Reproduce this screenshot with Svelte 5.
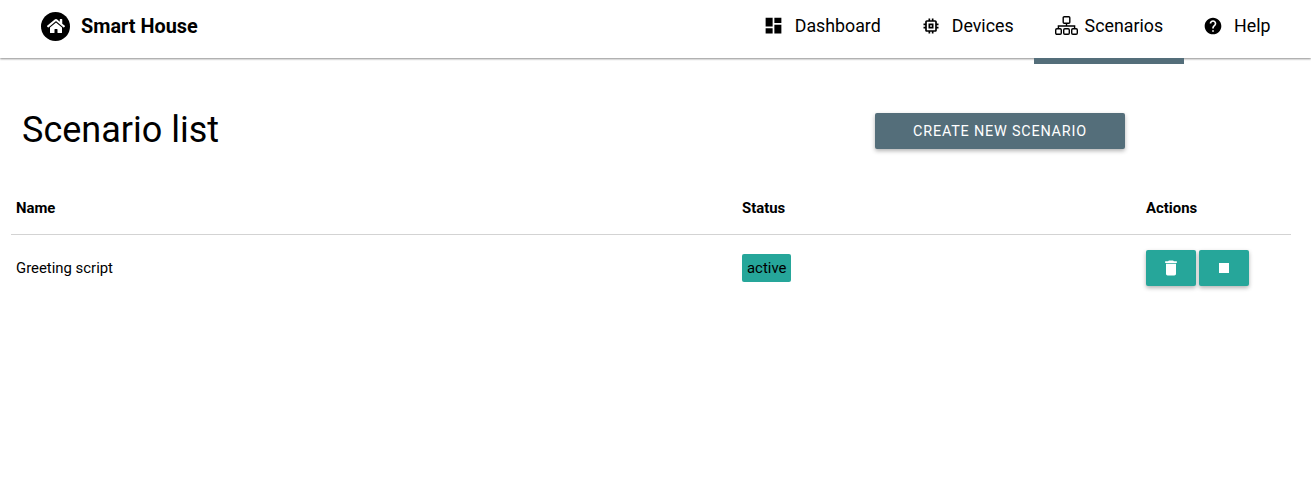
<script>
  const tabs = [
    { label: "Dashboard", icon: "dashboard", size: 21 },
    { label: "Devices", icon: "memory", size: 20 },
    { label: "Scenarios", icon: "sitemap", active: true },
    { label: "Help", icon: "help", size: 20 }
  ];

  const paths = {
    dashboard: "M3 13h8V3H3v10zm0 8h8v-6H3v6zm10 0h8V11h-8v10zm0-18v6h8V3h-8z",
    memory: "M15 9H9v6h6V9zm-2 4h-2v-2h2v2zm8-2V9h-2V7c0-1.1-.9-2-2-2h-2V3h-2v2h-2V3H9v2H7c-1.1 0-2 .9-2 2v2H3v2h2v2H3v2h2v2c0 1.1.9 2 2 2h2v2h2v-2h2v2h2v-2h2c1.1 0 2-.9 2-2v-2h2v-2h-2v-2h2zm-4 6H7V7h10v10z",
    help: "M12 2C6.48 2 2 6.48 2 12s4.48 10 10 10 10-4.48 10-10S17.52 2 12 2zm1 17h-2v-2h2v2zm2.07-7.75l-.9.92C13.45 12.9 13 13.5 13 15h-2v-.5c0-1.1.45-2.1 1.17-2.83l1.24-1.26c.37-.36.59-.86.59-1.41 0-1.1-.9-2-2-2s-2 .9-2 2H8c0-2.21 1.79-4 4-4s4 1.79 4 4c0 .88-.36 1.68-.93 2.25z"
  };
</script>

<header class="topbar">
  <div class="brand">
    <span class="logo">
      <svg viewBox="0 0 576 512" width="18" height="16">
        <path fill="#fff" d="M280.37 148.26L96 300.11V464a16 16 0 0 0 16 16l112.06-.29a16 16 0 0 0 15.92-16V368a16 16 0 0 1 16-16h64a16 16 0 0 1 16 16v95.64a16 16 0 0 0 16 16.05L464 480a16 16 0 0 0 16-16V300L295.67 148.26a12.19 12.19 0 0 0-15.3 0zM571.6 251.47L488 182.56V44.05a12 12 0 0 0-12-12h-56a12 12 0 0 0-12 12v72.61L318.47 43a48 48 0 0 0-61 0L4.34 251.47a12 12 0 0 0-1.6 16.9l25.5 31A12 12 0 0 0 45.15 301l235.22-193.74a12.19 12.19 0 0 1 15.3 0L530.9 301a12 12 0 0 0 16.9-1.6l25.5-31a12 12 0 0 0-1.7-16.93z" />
      </svg>
    </span>
    <span class="brand-name">Smart House</span>
  </div>
  <nav class="tabs">
    {#each tabs as tab}
      <div class="tab" class:active={tab.active}>
        {#if tab.icon === "sitemap"}
          <svg class="sitemap" viewBox="0 0 23 19" width="23" height="19" fill="none" stroke="#000" stroke-width="1.4">
            <rect x="8.2" y="0.7" width="6.6" height="6.6" rx="1" />
            <path d="M11.5 7.3V10M3.4 13V10H19.6V13" />
            <rect x="0.7" y="12.8" width="5.6" height="5.5" rx="1.2" />
            <rect x="8.7" y="12.8" width="5.6" height="5.5" rx="1.2" />
            <rect x="16.7" y="12.8" width="5.6" height="5.5" rx="1.2" />
          </svg>
        {:else}
          <svg viewBox="0 0 24 24" width={tab.size} height={tab.size}><path d={paths[tab.icon]} /></svg>
        {/if}
        <span>{tab.label}</span>
      </div>
    {/each}
  </nav>
</header>

<main class="page">
  <div class="title-row">
    <h1>Scenario list</h1>
    <button class="create">Create new scenario</button>
  </div>

  <table>
    <thead>
      <tr>
        <th class="col-name">Name</th>
        <th class="col-status">Status</th>
        <th>Actions</th>
      </tr>
    </thead>
    <tbody>
      <tr>
        <td>Greeting script</td>
        <td><span class="badge">active</span></td>
        <td>
          <div class="actions">
            <button class="icon-btn" aria-label="Delete">
              <svg viewBox="0 0 24 24" width="20" height="20"><path fill="#fff" d="M6 19c0 1.1.9 2 2 2h8c1.1 0 2-.9 2-2V7H6v12zM19 4h-3.5l-1-1h-5l-1 1H5v2h14V4z" /></svg>
            </button>
            <button class="icon-btn" aria-label="Stop">
              <svg viewBox="0 0 24 24" width="20" height="20"><path fill="#fff" d="M6 6h12v12H6z" /></svg>
            </button>
          </div>
        </td>
      </tr>
    </tbody>
  </table>
</main>

<style>
  :global(body) {
    margin: 0;
    background: #fff;
    font-family: Roboto, "Liberation Sans", sans-serif;
    color: #000;
  }
  .topbar {
    height: 58px;
    display: flex;
    align-items: center;
    justify-content: space-between;
    padding: 0 20.5px 0 41px;
    box-shadow: 0 1px 2px rgba(0, 0, 0, 0.45);
    background: #fff;
  }
  .brand {
    display: flex;
    align-items: center;
    gap: 11px;
    margin-top: -6px;
  }
  .logo {
    width: 29px;
    height: 29px;
    border-radius: 50%;
    background: #000;
    display: flex;
    align-items: center;
    justify-content: center;
  }
  .brand-name {
    font-size: 19.85px;
    font-weight: 700;
  }
  .tabs {
    display: flex;
    height: 100%;
  }
  .tab {
    position: relative;
    display: flex;
    align-items: center;
    gap: 11px;
    padding: 0 20px 7px 19px;
    font-size: 17.8px;
  }
  .tab:first-child,
  .tab.active {
    padding-right: 21px;
  }
  .tab svg {
    display: block;
  }
  .tab .sitemap {
    margin: 0 -4px 0 2px;
  }
  .tab.active::after {
    content: "";
    position: absolute;
    left: 0;
    right: 0;
    top: 58px;
    height: 6px;
    background: #546e7a;
  }
  .page {
    padding: 52px 20px 0 11px;
  }
  .title-row {
    display: grid;
    grid-template-columns: 864px 250px;
    align-items: center;
    height: 36px;
  }
  h1 {
    margin: 0 0 0 11px;
    font-size: 36px;
    font-weight: 400;
    position: relative;
    top: -1px;
  }
  .create {
    height: 36px;
    border: 0;
    border-radius: 2px;
    background: #546e7a;
    color: #fff;
    font-family: inherit;
    font-size: 14.4px;
    letter-spacing: 0.8px;
    text-transform: uppercase;
    box-shadow: 0 2px 4px rgba(0, 0, 0, 0.3);
  }
  table {
    width: 1280px;
    margin-top: 35px;
    border-collapse: collapse;
    table-layout: fixed;
    font-size: 14.9px;
  }
  th {
    height: 53px;
    padding: 0 5px;
    text-align: left;
    font-weight: 700;
    border-bottom: 1px solid #d3d3d3;
  }
  .col-name {
    width: 716px;
  }
  .col-status {
    width: 394px;
  }
  td {
    height: 66px;
    padding: 0 5px;
  }
  .badge {
    display: inline-block;
    padding: 0 5px;
    line-height: 28px;
    border-radius: 2px;
    background: #26a69a;
  }
  .actions {
    display: flex;
    gap: 3px;
  }
  .icon-btn {
    width: 50px;
    height: 36px;
    padding: 0;
    border: 0;
    border-radius: 2px;
    background: #26a69a;
    display: flex;
    align-items: center;
    justify-content: center;
    box-shadow: 0 2px 4px rgba(0, 0, 0, 0.3);
  }
</style>
